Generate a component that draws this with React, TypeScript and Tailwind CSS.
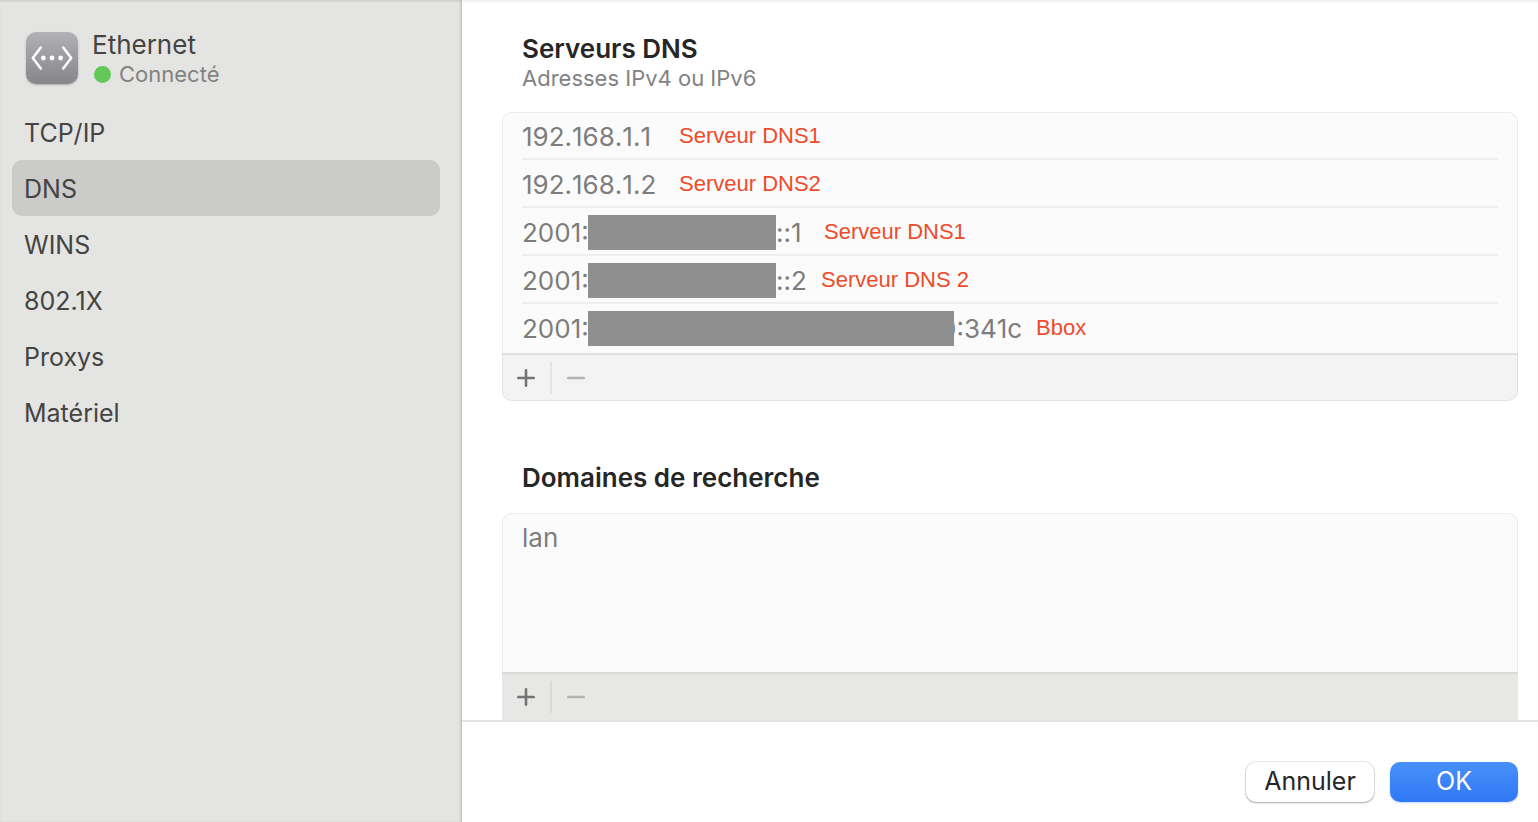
import React, { useState } from "react";

const tabs = ["TCP/IP", "DNS", "WINS", "802.1X", "Proxys", "Matériel"];

const servers = [
  { start: "192.168.1.1", label: "Serveur DNS1", width: "w-[157px]" },
  { start: "192.168.1.2", label: "Serveur DNS2", width: "w-[157px]" },
  { start: "2001:", mask: "w-[188px]", end: "::1", endClass: "[font-feature-settings:'calt'_0]", label: "Serveur DNS1", width: "w-[302px]" },
  { start: "2001:", mask: "w-[188px]", end: "::2", endClass: "[font-feature-settings:'calt'_0]", label: "Serveur DNS 2", width: "w-[299px]" },
  // the last digit of the hidden group sticks out from under the mask
  { start: "2001:", mask: "w-[366px]", end: "0:341c", endClass: "-ml-[14px]", label: "Bbox", width: "w-[514px]" },
];

const EthernetIcon = () => (
  <svg viewBox="0 0 52 52" className="h-[52px] w-[52px] shrink-0 rounded-[10px] bg-linear-to-b from-[#b1b1b6] to-[#85858a] shadow-[0_1px_2px_rgba(0,0,0,0.25)]">
    <g fill="none" stroke="white" strokeWidth="2.5" strokeLinecap="round" strokeLinejoin="round">
      <path d="M14.8 15.5 L6.8 26 L14.8 36.5" />
      <path d="M37.2 15.5 L45.2 26 L37.2 36.5" />
    </g>
    <g fill="white">
      <circle cx="17.4" cy="26" r="2.4" />
      <circle cx="26" cy="26" r="2.4" />
      <circle cx="34.6" cy="26" r="2.4" />
    </g>
  </svg>
);

const ListButtons = ({ className }: { className: string }) => (
  <div className={`flex h-12 items-center border-t-2 ${className}`}>
    <button aria-label="Ajouter" className="flex h-8 w-12 items-center justify-center text-[#737373]">
      <svg viewBox="0 0 18 18" className="h-[18px] w-[18px]" stroke="currentColor" strokeWidth="2.6" strokeLinecap="round">
        <path d="M1.3 9 H16.7 M9 1.3 V16.7" />
      </svg>
    </button>
    <span className="h-8 w-[2px] bg-black/6" />
    <button aria-label="Supprimer" disabled className="flex h-8 w-12 items-center justify-center text-[#b4b4b4]">
      <svg viewBox="0 0 18 18" className="h-[18px] w-[18px]" stroke="currentColor" strokeWidth="2.6" strokeLinecap="round">
        <path d="M1.3 9 H16.7" />
      </svg>
    </button>
  </div>
);

const App = () => {
  const [current, setCurrent] = useState("DNS");

  return (
    <div className="flex h-screen bg-white font-['Inter','Liberation_Sans',sans-serif] text-[26px] shadow-[inset_0_2px_2px_rgba(0,0,0,0.06)]">
      <aside className="w-[462px] shrink-0 bg-[#e4e4e2] pt-8 pr-[22px] pl-3 text-[#444443] shadow-[inset_-1px_0_0_#c4c4c3,inset_-2px_0_2px_rgba(0,0,0,0.1),inset_0_2px_2px_rgba(0,0,0,0.06)]">
        <div className="flex gap-[14px] pl-[14px]">
          <EthernetIcon />
          <div>
            <h1 className="leading-[26px]">Ethernet</h1>
            <p className="flex items-center gap-2 pl-[2px] text-[22px] leading-8 text-[#828281]">
              <span className="h-[17px] w-[17px] rounded-full bg-[#62c958]" />
              Connecté
            </p>
          </div>
        </div>
        <nav className="mt-[14px] flex flex-col">
          {tabs.map((tab) => (
            <a
              key={tab}
              href="#"
              onClick={() => setCurrent(tab)}
              className={`flex h-14 items-center rounded-[10px] px-3 pt-1 text-[25px] ${tab === current ? "bg-[#cbcbc9]" : ""}`}
            >
              {tab}
            </a>
          ))}
        </nav>
      </aside>

      <main className="flex min-w-0 flex-1 flex-col">
        <div className="flex-1 overflow-hidden pt-8 pr-5 pl-10">
          <div className="pl-5">
            <h2 className="leading-[34px] font-semibold text-[#262626]">Serveurs DNS</h2>
            <p className="text-[22px] leading-6 text-[#828282]">Adresses IPv4 ou IPv6</p>
          </div>
          <section className="mt-[22px] overflow-hidden rounded-[10px] bg-[#fbfbfb] shadow-[inset_0_0_0_1px_#ebebeb]">
            <ul className="px-5 pb-px text-[#7d7d7d]">
              {servers.map((server, index) => (
                <li key={index} className="flex h-12 items-center border-b-2 border-[#eeeeee] last:border-transparent">
                  <span className={`flex shrink-0 items-center [font-kerning:none] ${server.width}`}>
                    <span className={`pt-[2px] ${server.mask ? "w-[66px]" : ""}`}>{server.start}</span>
                    {server.mask && <span className={`relative mt-[2px] h-[35px] shrink-0 bg-[#8f8f8f] ${server.mask}`} />}
                    {server.end && <span className={`pt-[2px] ${server.endClass}`}>{server.end}</span>}
                  </span>
                  <span className="font-['Liberation_Sans',sans-serif] text-[22px] text-[#ee4b2b]">{server.label}</span>
                </li>
              ))}
            </ul>
            <ListButtons className="border-black/7 bg-black/3" />
          </section>

          <h2 className="mt-[61px] pl-5 leading-8 font-semibold text-[#262626]">Domaines de recherche</h2>
          <section className="mt-[19px] overflow-hidden rounded-t-[10px] bg-[#fbfbfb] shadow-[inset_0_0_0_1px_#ebebeb]">
            <ul className="h-[159px] px-5 text-[#7d7d7d]">
              <li className="flex h-12 items-center">lan</li>
            </ul>
            <ListButtons className="border-[#dadad9] bg-[#e7e7e5]" />
          </section>
        </div>

        <footer className="flex justify-end gap-4 border-t-2 border-[#e4e4e4] pt-10 pr-5 pb-5 text-[25px]">
          <button className="h-10 w-32 rounded-[10px] bg-white text-[#262626] shadow-[0_0_0_1px_rgba(0,0,0,0.08),0_1px_2px_rgba(0,0,0,0.3)]">
            Annuler
          </button>
          <button className="h-10 w-32 rounded-[10px] bg-linear-to-b from-[#4890f7] to-[#3078f6] text-white shadow-[0_1px_2px_rgba(48,120,246,0.3)]">
            OK
          </button>
        </footer>
      </main>
    </div>
  );
};

export default App;
